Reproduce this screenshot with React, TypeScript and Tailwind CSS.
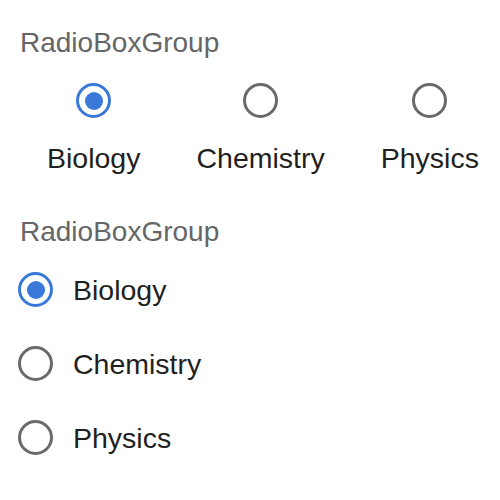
import React from "react";

const items = ["Biology", "Chemistry", "Physics"];

function Radio({ checked }: { checked: boolean }) {
  return checked ? (
    <div className="w-[35px] h-[35px] shrink-0 rounded-full border-[3px] border-[#3a79d9] flex items-center justify-center">
      <div className="w-[18px] h-[18px] rounded-full bg-[#3a79d9]" />
    </div>
  ) : (
    <div className="w-[35px] h-[35px] shrink-0 rounded-full border-[3px] border-[#6a6a6a]" />
  );
}

export default function App() {
  return (
    <div
      className="w-[500px] h-[500px] bg-white overflow-hidden pl-[18px] pt-[27px]"
      style={{ fontFamily: '"Liberation Sans", Arial, sans-serif' }}
    >
      <div className="ml-[2px] text-[28px] leading-[32px] text-[#666666] whitespace-nowrap">RadioBoxGroup</div>
      <div className="flex mt-[24px] ml-[1px]">
        {items.map((it, i) => (
          <div key={it} className="flex flex-col items-center px-7">
            <Radio checked={i === 0} />
            <div className="mt-[24px] text-[28.5px] leading-[32px] text-[#1f1f1f] whitespace-nowrap">{it}</div>
          </div>
        ))}
      </div>
      <div className="mt-[42px] ml-[2px] text-[28px] leading-[32px] text-[#666666] whitespace-nowrap">RadioBoxGroup</div>
      <div className="flex flex-col gap-[39px] mt-[24px]">
        {items.map((it, i) => (
          <div key={it} className="flex items-center gap-[20px] h-[35px]">
            <Radio checked={i === 0} />
            <div className="text-[28.5px] leading-[32px] text-[#1f1f1f] whitespace-nowrap">{it}</div>
          </div>
        ))}
      </div>
    </div>
  );
}
